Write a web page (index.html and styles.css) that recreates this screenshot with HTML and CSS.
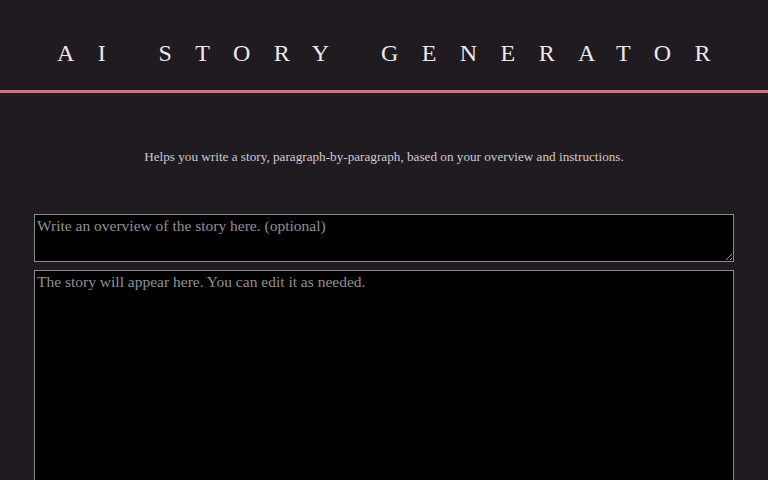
FILE: index.html
```html
<!DOCTYPE html>
<html lang="en">
<head>
<meta charset="utf-8">
<title>AI Story Generator</title>
<link rel="stylesheet" href="styles.css">
</head>
<body>
  <header class="site-header">
    <h1 class="site-title">AI STORY GENERATOR</h1>
  </header>
  <main class="page">
    <p class="intro">Helps you write a story, paragraph-by-paragraph, based on your overview and instructions.</p>
    <div class="editor">
      <textarea class="field overview" placeholder="Write an overview of the story here. (optional)"></textarea>
      <textarea class="field story" placeholder="The story will appear here. You can edit it as needed."></textarea>
    </div>
  </main>
</body>
</html>
```

FILE: styles.css
```css
html, body {
  margin: 0;
  padding: 0;
  background: #1f1b20;
  color: #e6e2e6;
  font-family: "Liberation Serif", "DejaVu Serif", serif;
}

body {
  height: 480px;
  overflow: hidden;
}

.site-header {
  height: 90px;
  border-bottom: 3px solid #d4707b;
  display: flex;
  align-items: center;
  justify-content: center;
}

.site-title {
  margin: 0;
  padding-left: 23px;
  padding-top: 16px;
  font-weight: 400;
  font-size: 24px;
  letter-spacing: 23.4px;
  color: #ece8ec;
}

.page {
  width: 700px;
  margin: 0 auto;
  padding-top: 55px;
}

.intro {
  margin: 0;
  text-align: center;
  font-size: 13.2px;
  color: #cfcad0;
  line-height: 18px;
}

.editor {
  margin-top: 48px;
  display: flex;
  flex-direction: column;
  gap: 8px;
}

.field {
  display: block;
  box-sizing: border-box;
  width: 700px;
  margin: 0;
  padding: 1px 2px;
  background: #000;
  color: #e6e2e6;
  border: 1px solid #8a8a8a;
  font-family: "Liberation Serif", "DejaVu Serif", serif;
  font-size: 15.5px;
  line-height: 20px;
}

.field::placeholder {
  color: #939093;
}

.overview {
  height: 48px;
}

.story {
  height: 320px;
}
```
